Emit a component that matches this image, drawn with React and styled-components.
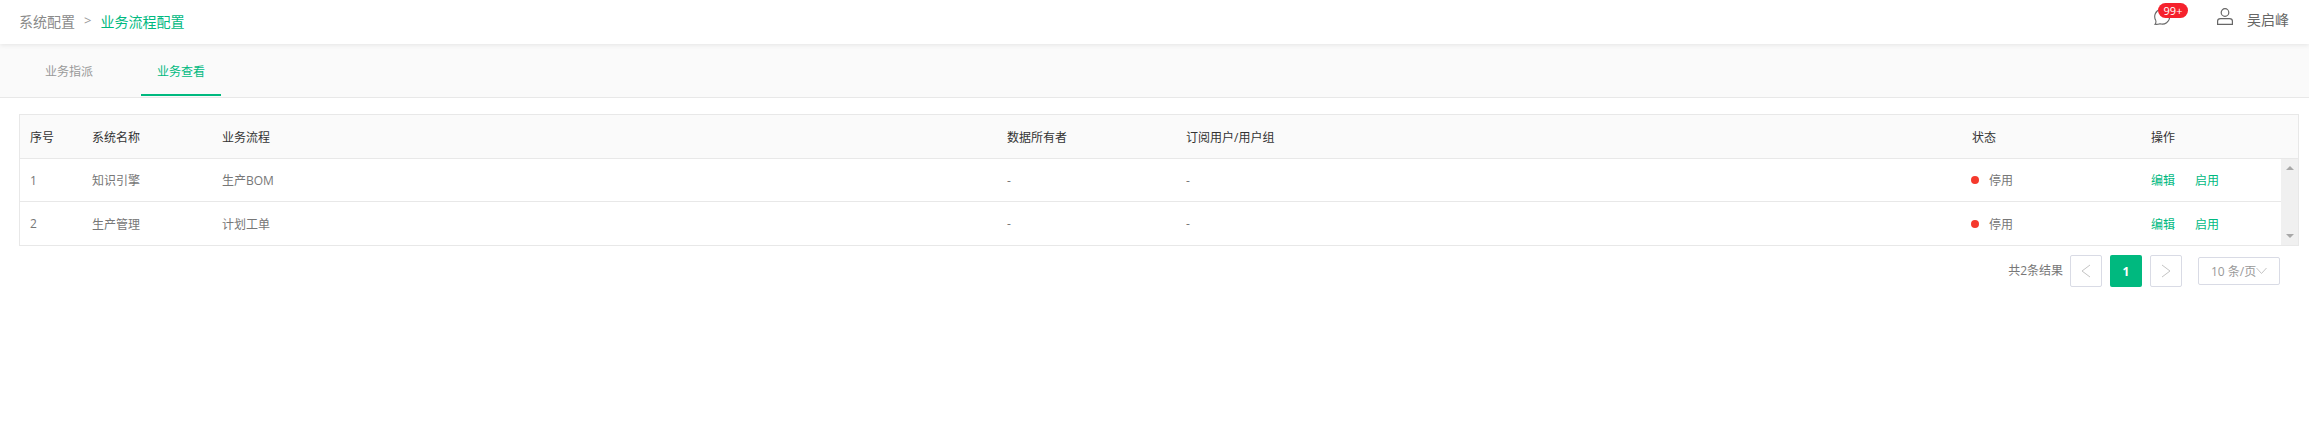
import React from "react";
import styled, { createGlobalStyle } from "styled-components";

const Global = createGlobalStyle`
  html, body { margin: 0; padding: 0; background: #fff; }
  body { font-family: "Open Sans", "Noto Sans CJK SC", sans-serif; font-size: 12px; color: #666; }
`;
const GREEN = "#00b97f";
const Page = styled.div`width: 2309px; height: 429px; overflow: hidden; background: #fff;`;
const Header = styled.header`
  height: 44px; display: flex; align-items: center; padding: 0 19px; background: #fff;
  box-shadow: 0 1px 5px rgba(0,0,0,.09); position: relative; z-index: 1;
`;
const Crumb = styled.span`font-size: 14px; line-height: 20px; color: ${p => p.$active ? GREEN : "#8a8a8a"};`;
const CrumbSep = styled.span`font-size: 13px; color: #999; margin: 0 9px 0 9px; position: relative; top: -2px;`;
const HeaderRight = styled.div`margin-left: auto; align-self: flex-start; margin-top: 8px; display: flex; align-items: flex-start;`;
const Bell = styled.div`position: relative; width: 16px; height: 17px; margin-right: 47px;`;
const Badge = styled.span`
  position: absolute; left: 4px; top: -5px; width: 30px; height: 15px; border-radius: 8px; background: #f5222d;
  color: #fff; font-size: 11px; line-height: 15px; text-align: center;
`;
const User = styled.div`display: flex; align-items: flex-start; gap: 14px; margin-right: 1px; color: #666; font-size: 14px;`;
const UserName = styled.span`line-height: 20px; margin-top: 2px;`;
const Tabs = styled.nav`
  height: 54px; box-sizing: border-box; background: #fafafa; border-bottom: 1px solid #e8e8e8;
  display: flex; align-items: flex-end; padding-left: 29px; gap: 32px;
`;
const Tab = styled.div`
  width: 80px; height: 43px; box-sizing: border-box; text-align: center; line-height: 32px; padding-top: 3px; margin-bottom: 1px;
  color: ${p => p.$active ? GREEN : "#999"};
  border-bottom: 2px solid ${p => p.$active ? GREEN : "transparent"};
`;
const Content = styled.main`padding: 16px 10px 0 19px;`;
const Table = styled.div`border: 1px solid #e8e8e8; box-sizing: border-box; width: 2280px;`;
const COLS = "62px 130px 785px 179px 786px 179px 1fr";
const HeadRow = styled.div`
  display: grid; grid-template-columns: ${COLS}; height: 43px; align-items: center; background: #fafafa;
  border-bottom: 1px solid #e8e8e8; color: #333;
`;
const BodyWrap = styled.div`display: flex;`;
const Rows = styled.div`flex: 1;`;
const Row = styled.div`
  display: grid; grid-template-columns: ${COLS}; height: 42px; box-sizing: border-box; align-items: center; color: #777;
  & + & { border-top: 1px solid #e8e8e8; height: 44px; }
`;
const Cell = styled.div`padding-left: 10px;`;
const Status = styled(Cell)`display: flex; align-items: center; gap: 10px; padding-left: 9px;`;
const Dot = styled.i`width: 8px; height: 8px; border-radius: 50%; background: #f5392d;`;
const Actions = styled(Cell)`display: flex; gap: 20px; color: ${GREEN};`;
const Scrollbar = styled.div`
  width: 17px; background: #f0f0f0; display: flex; flex-direction: column; justify-content: space-between; align-items: center; padding: 7px 0 7px; box-sizing: border-box;
`;
const Arrow = styled.i`
  width: 0; height: 0; border-left: 4px solid transparent; border-right: 4px solid transparent;
  ${p => p.$up ? "border-bottom: 4px solid #a8a8a8;" : "border-top: 4px solid #a8a8a8;"}
`;
const Pager = styled.div`display: flex; align-items: center; justify-content: flex-end; padding-right: 1px; margin-top: 9px; width: 2261px; height: 32px;`;
const Total = styled.span`color: #777; margin-right: 7px; padding-bottom: 2px;`;
const PageBtn = styled.div`
  width: 32px; height: 32px; box-sizing: border-box; border-radius: 2px; display: flex; align-items: center; justify-content: center;
  margin-right: 8px; font-weight: 700;
  ${p => p.$active ? `background: ${GREEN}; color: #fff;` : "border: 1px solid #d9dbe5;"}
`;
const SizeSelect = styled.div`
  width: 82px; height: 28px; margin-left: 8px; box-sizing: border-box; border: 1px solid #d9dbe5; border-radius: 2px; color: #999;
  display: flex; align-items: center; padding-left: 12px; white-space: nowrap;
`;

const Chevron = ({ d, w = 10, h = 14 }) => (
  <svg width={w} height={h} viewBox={`0 0 ${w} ${h}`} fill="none" stroke="#c4c4c4" strokeWidth="1"><path d={d} /></svg>
);

const rows = [
  ["1", "知识引擎", "生产BOM"],
  ["2", "生产管理", "计划工单"],
];

export default function App() {
  return (
    <Page>
      <Global />
      <Header>
        <Crumb>系统配置</Crumb>
        <CrumbSep>&gt;</CrumbSep>
        <Crumb $active>业务流程配置</Crumb>
        <HeaderRight>
          <Bell>
            <svg width="16" height="17" viewBox="0 0 16 17" fill="none" stroke="#666" strokeWidth="1.1">
              <path d="M1.800 12.500 A7.500 7.500 0 1 1 6 15.800 Q3.500 16.500 1 16.300 Q2.300 14.800 1.800 12.500" />
            </svg>
            <Badge>99+</Badge>
          </Bell>
          <User>
            <svg width="16" height="17" viewBox="0 0 16 17" fill="none" stroke="#666" strokeWidth="1.2">
              <circle cx="8" cy="4.500" r="3.800" />
              <path d="M.600 16.400 V13 Q.600 10.600 3.500 10.600 H12.500 Q15.400 10.600 15.400 13 V16.400 Z" />
            </svg>
            <UserName>吴启峰</UserName>
          </User>
        </HeaderRight>
      </Header>
      <Tabs>
        <Tab>业务指派</Tab>
        <Tab $active>业务查看</Tab>
      </Tabs>
      <Content>
        <Table>
          <HeadRow>
            <Cell>序号</Cell><Cell>系统名称</Cell><Cell>业务流程</Cell><Cell>数据所有者</Cell>
            <Cell>订阅用户/用户组</Cell><Cell>状态</Cell><Cell>操作</Cell>
          </HeadRow>
          <BodyWrap>
            <Rows>
              {rows.map(r => (
                <Row key={r[0]}>
                  <Cell>{r[0]}</Cell><Cell>{r[1]}</Cell><Cell>{r[2]}</Cell><Cell>-</Cell><Cell>-</Cell>
                  <Status><Dot />停用</Status>
                  <Actions><span>编辑</span><span>启用</span></Actions>
                </Row>
              ))}
            </Rows>
            <Scrollbar><Arrow $up /><Arrow /></Scrollbar>
          </BodyWrap>
        </Table>
        <Pager>
          <Total>共2条结果</Total>
          <PageBtn><Chevron d="M9 1 L1 7 L9 13" /></PageBtn>
          <PageBtn $active>1</PageBtn>
          <PageBtn><Chevron d="M1 1 L9 7 L1 13" /></PageBtn>
          <SizeSelect>10 条/页<Chevron w={11} h={8} d="M.5 1 L5.500 6.500 L10.500 1" /></SizeSelect>
        </Pager>
      </Content>
    </Page>
  );
}
